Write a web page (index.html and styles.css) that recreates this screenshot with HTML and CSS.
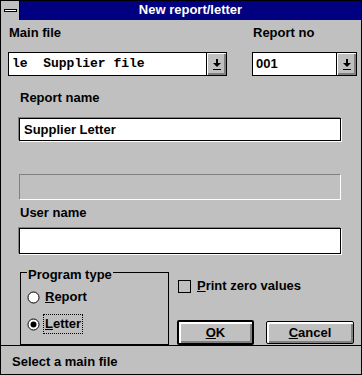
FILE: index.html
```html
<!DOCTYPE html>
<html lang="en">
<head>
    <meta charset="UTF-8">
    <meta name="viewport" content="width=device-width, initial-scale=1.0">
    <title>New report/letter</title>
    <link rel="stylesheet" href="styles.css">
</head>
<body>

    <div class="janela">
        <div class="titulo">
            <div class="menu-sistema"><span class="traco"></span></div>
            <div class="titulo-texto">New report/letter</div>
        </div>

        <div class="conteudo">
            <div class="linha-topo">
                <div class="coluna-arquivo">
                    <div class="rotulo">Main file</div>
                    <div class="combo">
                        <span class="combo-texto mono">le  Supplier file</span>
                        <span class="combo-botao">
                            <svg width="18" height="22" viewBox="0 0 18 22">
                                <rect x="8" y="6" width="2" height="4" fill="#000"/>
                                <polygon points="5,10 13,10 9,14" fill="#000"/>
                                <rect x="5" y="16" width="8" height="1" fill="#000"/>
                            </svg>
                        </span>
                    </div>
                </div>
                <div class="coluna-numero">
                    <div class="rotulo">Report no</div>
                    <div class="combo">
                        <span class="combo-texto">001</span>
                        <span class="combo-botao">
                            <svg width="18" height="22" viewBox="0 0 18 22">
                                <rect x="8" y="6" width="2" height="4" fill="#000"/>
                                <polygon points="5,10 13,10 9,14" fill="#000"/>
                                <rect x="5" y="16" width="8" height="1" fill="#000"/>
                            </svg>
                        </span>
                    </div>
                </div>
            </div>

            <div class="campos">
                <div class="rotulo rotulo-nome">Report name</div>
                <div class="edicao edicao-nome">Supplier Letter</div>
                <div class="edicao desativado"></div>
                <div class="rotulo rotulo-usuario">User name</div>
                <div class="edicao edicao-usuario"></div>

                <div class="parte-baixo">
                    <fieldset class="grupo">
                        <legend>Program type</legend>
                        <div class="opcao">
                            <svg width="13" height="13" viewBox="0 0 13 13">
                                <circle cx="6.5" cy="6.5" r="5.5" fill="#fff" stroke="#000" stroke-width="1"/>
                            </svg>
                            <span class="opcao-texto"><u>R</u>eport</span>
                        </div>
                        <div class="opcao">
                            <svg width="13" height="13" viewBox="0 0 13 13">
                                <circle cx="6.5" cy="6.5" r="5.5" fill="#fff" stroke="#000" stroke-width="1"/>
                                <circle cx="6.5" cy="6.5" r="3" fill="#000"/>
                            </svg>
                            <span class="opcao-texto foco"><u>L</u>etter</span>
                        </div>
                    </fieldset>

                    <div class="lado">
                        <div class="marcar">
                            <span class="caixa"></span>
                            <span><u>P</u>rint zero values</span>
                        </div>
                        <div class="botoes">
                            <div class="botao padrao"><u>O</u>K</div>
                            <div class="botao cancelar"><u>C</u>ancel</div>
                        </div>
                    </div>
                </div>
            </div>
        </div>

        <div class="status">Select a main file</div>
    </div>

</body>
</html>
```

FILE: styles.css
```css
body {
    font-family: "Liberation Sans", Arial, sans-serif;
    font-size: 13px;
    font-weight: bold;
    margin: 0;
    padding: 0;
    background-color: #c0c0c0;
}
.janela {
    width: 362px;
    height: 375px;
    box-sizing: border-box;
    border: 1px solid #000;
    background-color: #c0c0c0;
    display: flex;
    flex-direction: column;
}
.titulo {
    height: 19px;
    box-sizing: border-box;
    display: flex;
    background-color: #000080;
}
.menu-sistema {
    width: 19px;
    background-color: #c0c0c0;
    border-right: 1px solid #000;
    box-sizing: border-box;
    display: flex;
    align-items: center;
    justify-content: center;
}
.traco {
    display: block;
    width: 11px;
    height: 1px;
    background-color: #fff;
    border: 1px solid #000;
}
.titulo-texto {
    flex: 1;
    color: #fff;
    text-align: center;
    line-height: 18px;
}
.conteudo {
    flex: 1;
    padding-left: 7px;
}
.linha-topo {
    display: flex;
    margin-top: 5px;
}
.coluna-arquivo {
    width: 219px;
}
.coluna-numero {
    width: 105px;
    margin-left: 25px;
}
.rotulo {
    line-height: 16px;
    padding-left: 1px;
}
.combo {
    margin-top: 11px;
    height: 24px;
    box-sizing: border-box;
    border: 1px solid #000;
    background-color: #fff;
    display: flex;
}
.combo-texto {
    flex: 1;
    line-height: 22px;
    padding-left: 3px;
}
.mono {
    font-family: "Liberation Mono", "Courier New", monospace;
    white-space: pre;
}
.combo-botao {
    width: 20px;
    box-sizing: border-box;
    border-left: 1px solid #000;
    background-color: #c0c0c0;
    box-shadow: inset 1px 1px 0 #fff, inset -2px -2px 0 #808080;
    display: flex;
    align-items: center;
    justify-content: center;
}
.campos {
    padding-left: 11px;
}
.rotulo-nome {
    margin-top: 14px;
}
.edicao {
    width: 322px;
    box-sizing: border-box;
    border: 1px solid #000;
    background-color: #fff;
    box-shadow: -1px -1px 0 #808080, 1px 1px 0 #fff;
    padding-left: 4px;
}
.edicao-nome {
    margin-top: 12px;
    height: 23px;
    line-height: 21px;
}
.desativado {
    margin-top: 33px;
    height: 26px;
    background-color: #c0c0c0;
    border: 1px solid;
    border-color: #808080 #fff #fff #808080;
    box-shadow: none;
}
.rotulo-usuario {
    margin-top: 5px;
}
.edicao-usuario {
    margin-top: 7px;
    height: 26px;
}
.parte-baixo {
    display: flex;
    margin-top: 8px;
}
.grupo {
    margin: 0 0 0 1px;
    width: 149px;
    box-sizing: border-box;
    border: 1px solid #000;
    padding: 5px 0 10px 6px;
    display: flex;
    flex-direction: column;
    gap: 7px;
}
.grupo legend {
    padding: 5px 1px 0 1px;
    line-height: 15px;
}
.opcao {
    height: 20px;
    display: flex;
    align-items: center;
}
.opcao svg {
    margin-right: 3px;
}
.opcao-texto {
    border: 1px dotted transparent;
    padding: 0 1px;
    line-height: 18px;
}
.opcao-texto.foco {
    border-color: #000;
}
.lado {
    margin-left: 8px;
}
.marcar {
    margin-top: 17px;
    margin-left: 1px;
    display: flex;
    align-items: center;
    line-height: 14px;
}
.caixa {
    width: 13px;
    height: 13px;
    box-sizing: border-box;
    border: 1px solid #000;
    margin-right: 6px;
}
.botoes {
    margin-top: 27px;
    display: flex;
    align-items: center;
    gap: 12px;
}
.botao {
    box-sizing: border-box;
    border: 1px solid #000;
    border-radius: 2px;
    background-color: #c0c0c0;
    box-shadow: inset 1px 1px 0 #fff, inset 2px 2px 0 #fff, inset -1px -1px 0 #808080, inset -2px -2px 0 #808080;
    text-align: center;
}
.padrao {
    width: 77px;
    height: 25px;
    border-width: 2px;
    line-height: 21px;
}
.cancelar {
    width: 88px;
    height: 23px;
    line-height: 21px;
}
.status {
    height: 29px;
    box-sizing: border-box;
    border-top: 1px solid #000;
    padding: 8px 0 0 11px;
    line-height: 16px;
}
```
